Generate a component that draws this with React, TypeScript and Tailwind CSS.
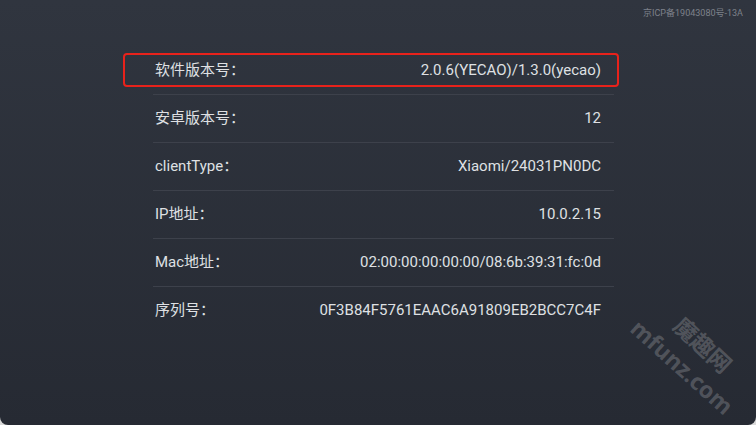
import React from "react";

const rows: { label: string; value: string }[] = [
  { label: "软件版本号：", value: "2.0.6(YECAO)/1.3.0(yecao)" },
  { label: "安卓版本号：", value: "12" },
  { label: "clientType：", value: "Xiaomi/24031PN0DC" },
  { label: "IP地址：", value: "10.0.2.15" },
  { label: "Mac地址：", value: "02:00:00:00:00:00/08:6b:39:31:fc:0d" },
  { label: "序列号：", value: "0F3B84F5761EAAC6A91809EB2BCC7C4F" },
];

const font = { fontFamily: "Roboto, 'Noto Sans CJK SC', sans-serif" };

export default function App() {
  return (
    <div className="h-[425px] w-[756px] bg-[#d9d9d9]" style={font}>
      <div className="relative flex h-full w-full flex-col overflow-hidden rounded-b-[8px] bg-gradient-to-b from-[#30353f] to-[#262a33]">
        <div className="flex h-[47px] justify-end pr-[13px] pt-[7px] text-[9px] leading-[12px] text-[#7e828b]">
          京ICP备19043080号-13A
        </div>

        <div className="ml-[153px] flex w-[461px] flex-col">
          {rows.map((row, i) => (
            <div
              key={row.label}
              className={
                "relative flex h-[48px] items-center justify-between pb-[1px] pl-[2px] pr-[13px] text-[15px] text-[#dfe0e3] " +
                (i < rows.length - 1 ? "border-b border-[#3d414b]" : "")
              }
            >
              <span>{row.label}</span>
              <span>{row.value}</span>
              {i === 0 && (
                <div className="absolute left-[-30px] right-[-5px] top-[6px] h-[34px] rounded-[4px] border-[2.5px] border-[#e8221b]" />
              )}
            </div>
          ))}
        </div>

        <div className="absolute left-[702px] top-[346px] -translate-x-1/2 -translate-y-1/2 rotate-[43deg] whitespace-nowrap text-[23px] font-bold leading-none text-white/20">
          魔趣网
        </div>
        <div
          className="absolute left-[682px] top-[367px] -translate-x-1/2 -translate-y-1/2 rotate-[42deg] whitespace-nowrap text-[23px] font-bold leading-none text-white/20"
          style={{ fontFamily: "'Open Sans', sans-serif" }}
        >
          mfunz.com
        </div>
      </div>
    </div>
  );
}
